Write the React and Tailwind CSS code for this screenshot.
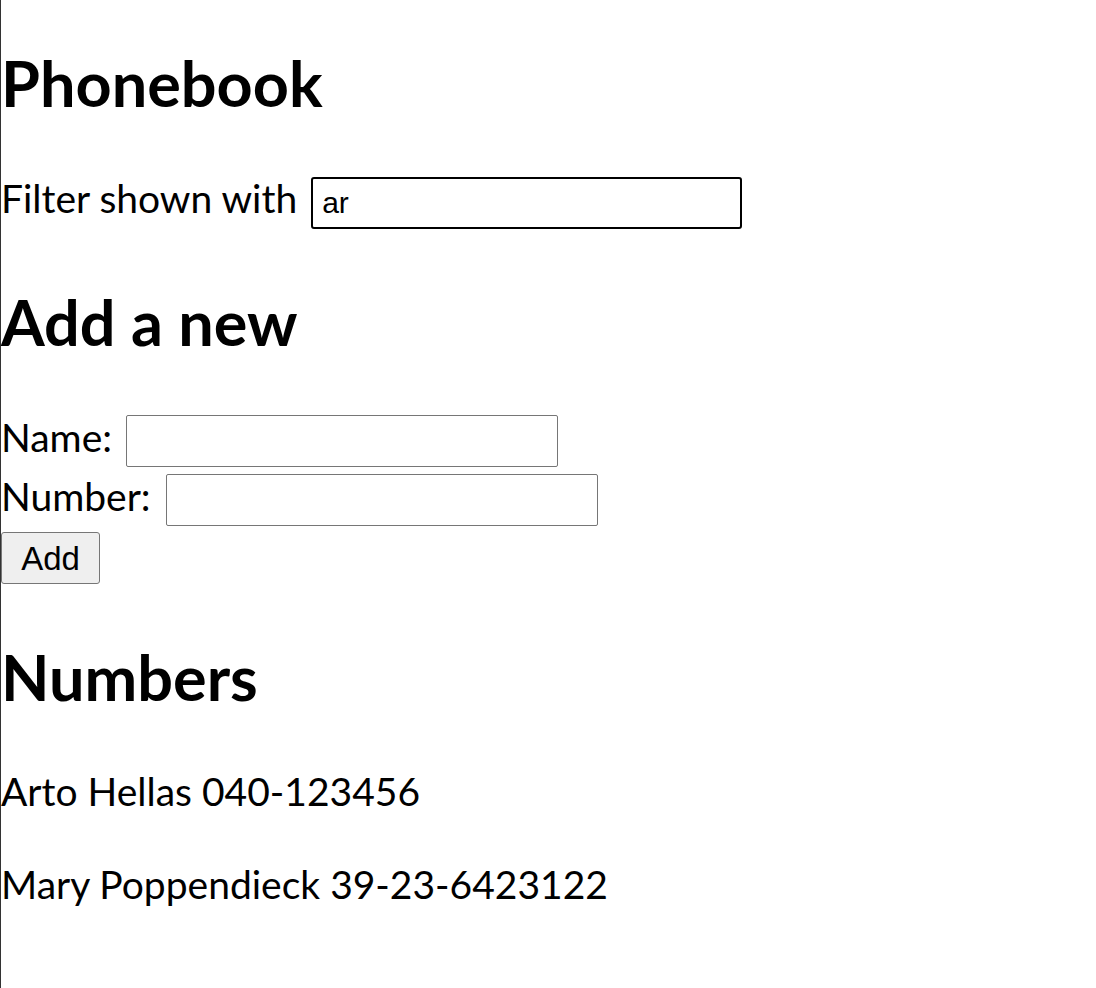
import { useState } from 'react';

const persons = [
  { name: 'Arto Hellas', number: '040-123456' },
  { name: 'Mary Poppendieck', number: '39-23-6423122' },
];

export default function App() {
  const [filter, setFilter] = useState('ar');
  const [newName, setNewName] = useState('');
  const [newNumber, setNewNumber] = useState('');

  return (
    <div className="min-h-[988px] pt-[51px] border-l border-[#333] bg-white text-black font-['Lato',sans-serif] text-[39px] leading-[40px]">
      <h2 className="text-[63px] leading-[63px] font-bold">Phonebook</h2>

      {/* filter */}
      <div className="mt-[63px] flex items-start gap-[14px]">
        <span className="mt-[1px]">Filter shown with</span>
        <input
          autoFocus
          value={filter}
          onChange={(e) => setFilter(e.target.value)}
          className="w-[431px] h-[52px] border-2 border-black rounded-[3px] px-[9px] font-['Liberation_Sans',Arial,sans-serif] text-[30px] text-black caret-black outline-none"
        />
      </div>

      <h2 className="mt-[61px] text-[63px] leading-[63px] font-bold">Add a new</h2>

      <form onSubmit={(e) => e.preventDefault()}>
        <div className="mt-[62px] flex items-start gap-[14px]">
          <span className="mt-[2px]">Name:</span>
          <input
            value={newName}
            onChange={(e) => setNewName(e.target.value)}
            className="w-[432px] h-[52px] border border-[#767676] rounded-[2px] px-[6px] font-['Liberation_Sans',Arial,sans-serif] text-[30px] outline-none"
          />
        </div>
        <div className="mt-[7px] flex items-start gap-[15px]">
          <span className="mt-[2px]">Number:</span>
          <input
            value={newNumber}
            onChange={(e) => setNewNumber(e.target.value)}
            className="w-[432px] h-[52px] border border-[#767676] rounded-[2px] px-[6px] font-['Liberation_Sans',Arial,sans-serif] text-[30px] outline-none"
          />
        </div>
        <div className="mt-[6px]">
          <button
            type="submit"
            className="w-[99px] h-[52px] bg-[#efefef] border border-[#767676] rounded-[3px] font-['Liberation_Sans',Arial,sans-serif] text-[33px] leading-none text-black"
          >
            Add
          </button>
        </div>
      </form>

      <h2 className="mt-[61px] text-[63px] leading-[63px] font-bold">Numbers</h2>
      {persons.map((p, i) => (
        <p key={p.name} className={i === 0 ? 'mt-[63px]' : 'mt-[53px]'}>
          {p.name} {p.number}
        </p>
      ))}
    </div>
  );
}
